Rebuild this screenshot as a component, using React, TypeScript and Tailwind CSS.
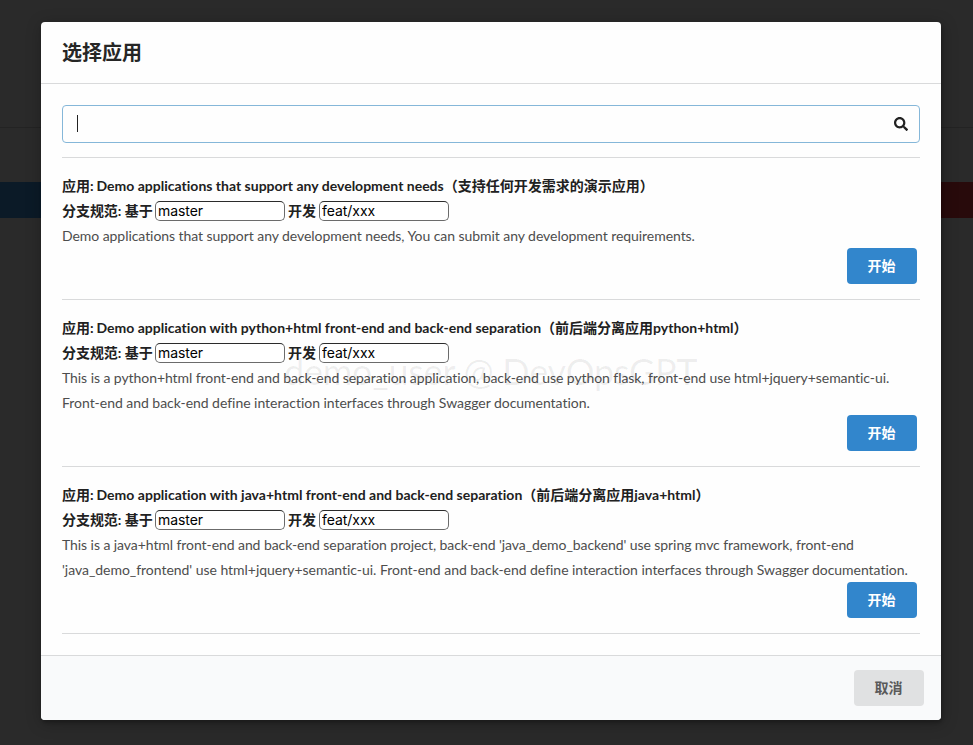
import { FaSearch } from "react-icons/fa";

type Line = { text: string; tracking: string };
type Application = { name: string; note: string; nameTracking: string; description: Line[] };

const applications: Application[] = [
  {
    name: "Demo applications that support any development needs",
    note: "（支持任何开发需求的演示应用）",
    nameTracking: "tracking-[0.005px]",
    description: [
      {
        text: "Demo applications that support any development needs, You can submit any development requirements.",
        tracking: "tracking-[-0.06px]",
      },
    ],
  },
  {
    name: "Demo application with python+html front-end and back-end separation",
    note: "（前后端分离应用python+html）",
    nameTracking: "tracking-[0.01px]",
    description: [
      {
        text: "This is a python+html front-end and back-end separation application, back-end use python flask, front-end use html+jquery+semantic-ui.",
        tracking: "tracking-[-0.067px]",
      },
      {
        text: "Front-end and back-end define interaction interfaces through Swagger documentation.",
        tracking: "tracking-[-0.035px]",
      },
    ],
  },
  {
    name: "Demo application with java+html front-end and back-end separation",
    note: "（前后端分离应用java+html）",
    nameTracking: "tracking-[0.02px]",
    description: [
      {
        text: "This is a java+html front-end and back-end separation project, back-end 'java_demo_backend' use spring mvc framework, front-end",
        tracking: "tracking-[-0.073px]",
      },
      {
        text: "'java_demo_frontend' use html+jquery+semantic-ui. Front-end and back-end define interaction interfaces through Swagger documentation.",
        tracking: "tracking-[-0.034px]",
      },
    ],
  },
];

function BranchInput({ value }: { value: string }) {
  return (
    <input
      defaultValue={value}
      className="h-5 w-[130px] rounded-[5px] border border-[#6b6b6b] border-t-[#2b2b2b] bg-white px-[2px] font-['Inter','Liberation_Sans',sans-serif] text-[14px] font-normal leading-none tracking-[-0.05px] text-black outline-none"
    />
  );
}

function ApplicationItem({ app }: { app: Application }) {
  return (
    <section className="flex flex-col border-b border-[#d9dadb] py-[15px] leading-[25px]">
      <h2 className="flex h-[25px] whitespace-nowrap font-bold text-[#212121]">
        <span className="w-[34.5px]">应用:</span>
        <span className={app.nameTracking}>{app.name}</span>
        <span>{app.note}</span>
      </h2>
      <div className="flex h-[25px] items-center whitespace-nowrap font-bold text-[#212121]">
        <span className="w-[93px] tracking-[-0.05px]">分支规范: 基于</span>
        <BranchInput value="master" />
        <span className="mx-[3px]">开发</span>
        <BranchInput value="feat/xxx" />
      </div>
      {app.description.map((line) => (
        <p key={line.text} className={`h-[25px] whitespace-nowrap text-[#4d4d4d] ${line.tracking}`}>
          {line.text}
        </p>
      ))}
      <button className="mr-[3px] h-9 w-[70px] self-end rounded-[4px] bg-[#3286cc] pb-[2px] pr-px font-bold text-white">
        开始
      </button>
    </section>
  );
}

export default function App() {
  return (
    <div className="relative h-[745px] w-[973px] overflow-hidden bg-[#2a2a2a] font-['Lato','Noto_Sans_CJK_SC',sans-serif] text-[14px]">
      <div className="absolute inset-x-0 top-[127px] h-px bg-[#232323]" />
      <div className="absolute inset-x-0 top-[182px] flex h-9">
        <div className="flex-1 bg-[#0b1a27]" />
        <div className="flex-1 bg-[#280a0b]" />
      </div>
      <main className="relative mx-[41px] mt-[22px] flex h-[698px] w-[900px] flex-col overflow-hidden rounded-[4px] bg-[#fefefe] shadow-[1px_3px_3px_0_rgba(0,0,0,0.2),1px_3px_15px_2px_rgba(0,0,0,0.2)]">
        <header className="flex h-[62px] items-center border-b border-[#d9dadb] px-[21px] pb-[2px]">
          <h1 className="text-[20px] font-bold leading-[26px] text-[#262626]">选择应用</h1>
        </header>
        <div className="flex flex-1 flex-col px-[21px] pt-[21px]">
          <div className="flex h-[38px] items-center justify-between rounded-[4px] border border-[#85b7d9] pl-[14px] pr-[11px]">
            <span className="mb-px h-[17px] w-px bg-[#222]" />
            <FaSearch className="size-[14px] text-[#222]" />
          </div>
          <div className="mt-[14px] border-t border-[#d9dadb]">
            {applications.map((app) => (
              <ApplicationItem key={app.name} app={app} />
            ))}
          </div>
        </div>
        <footer className="flex h-[65px] items-center justify-end border-t border-[#d9dadb] bg-[#f9fafb] pr-[17px]">
          <button className="h-9 w-[70px] rounded-[4px] bg-[#e0e1e2] pb-[2px] pr-px font-bold text-[#5a5a5a]">
            取消
          </button>
        </footer>
      </main>
      <div className="pointer-events-none absolute left-[284px] top-[349px] whitespace-nowrap text-[36px] leading-[44px] tracking-[-0.25px] text-black/[0.065]">
        demo_user @ DevOpsGPT
      </div>
    </div>
  );
}
